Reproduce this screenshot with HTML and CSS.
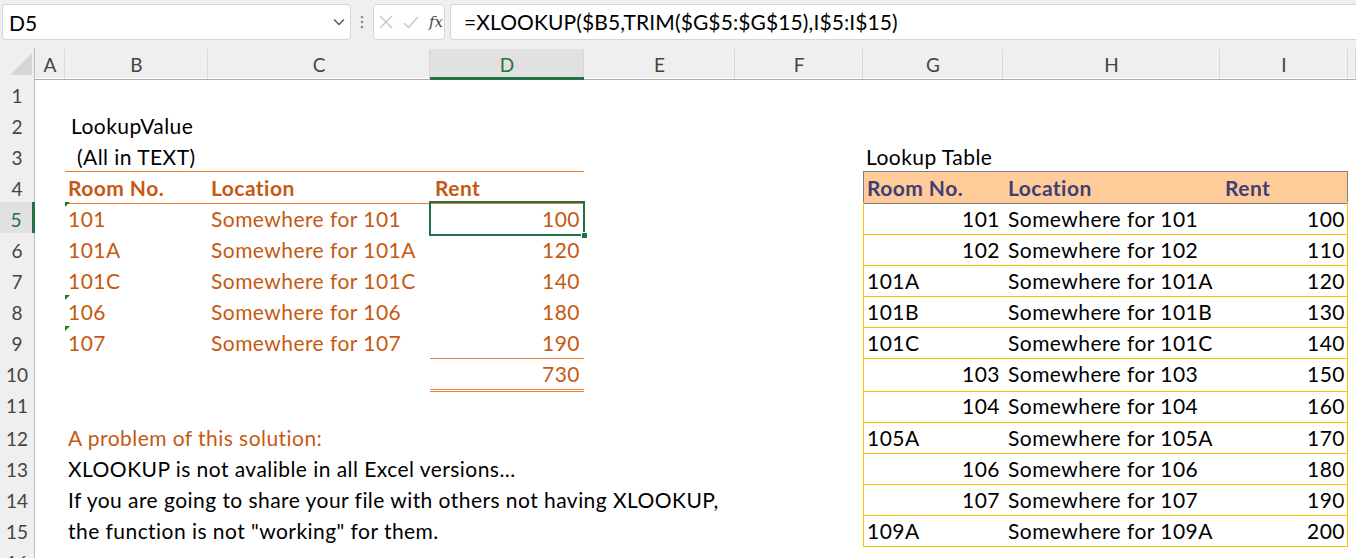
FILE: index.html
```html
<!DOCTYPE html>
<html lang="en">
<head>
  <meta charset="UTF-8" />
  <title>XLOOKUP with TRIM</title>
  <link rel="stylesheet" href="styles.css">
</head>
<body>
  <div class="toolbar">
    <div class="namebox">
      <span>D5</span>
      <svg class="chev" width="12" height="8" viewBox="0 0 12 8"><path d="M1 1.5 L6 6.5 L11 1.5" fill="none" stroke="#555" stroke-width="1.4"/></svg>
    </div>
    <svg class="grip" width="4" height="14" viewBox="0 0 4 14"><circle cx="2" cy="2" r="1.3" fill="#8a8a8a"/><circle cx="2" cy="7" r="1.3" fill="#8a8a8a"/><circle cx="2" cy="12" r="1.3" fill="#8a8a8a"/></svg>
    <div class="fxbox">
      <svg width="14" height="14" viewBox="0 0 14 14"><path d="M1 1 L13 13 M13 1 L1 13" stroke="#c4c4c4" stroke-width="1.4"/></svg>
      <svg width="16" height="13" viewBox="0 0 16 13"><path d="M1 7 L5.5 11.5 L15 1" fill="none" stroke="#c4c4c4" stroke-width="1.4"/></svg>
      <span class="fx">fx</span>
    </div>
    <div class="formula">=XLOOKUP($B5,TRIM($G$5:$G$15),I$5:I$15)</div>
  </div>

  <div class="sheet">
    <div class="row colhead">
      <div class="corner"><svg width="24" height="24" viewBox="0 0 24 24"><polygon points="23,1 23,23 1,23" fill="#d6d6d6"/></svg></div>
      <div class="ch">A</div><div class="ch">B</div><div class="ch">C</div>
      <div class="ch sel">D</div><div class="ch">E</div><div class="ch">F</div>
      <div class="ch">G</div><div class="ch">H</div><div class="ch">I</div><div class="ch"></div>
    </div>

    <div class="row"><div class="rh">1</div></div>
    <div class="row"><div class="rh">2</div><div class="b ind1">LookupValue</div></div>
    <div class="row">
      <div class="rh">3</div><div class="b ind2">(All in TEXT)</div>
      <div class="g">Lookup Table</div>
    </div>
    <div class="row">
      <div class="rh">4</div>
      <div class="b lh top">Room No.</div><div class="c lh top">Location</div><div class="d lh top rent">Rent</div>
      <div class="g th thl">Room No.</div><div class="h th">Location</div><div class="i th thr">Rent</div>
    </div>
    <div class="row">
      <div class="rh rsel">5</div>
      <div class="b lt flag">101</div><div class="c lt">Somewhere for 101</div><div class="d lt num cur">100</div>
      <div class="g tl num">101</div><div class="h td">Somewhere for 101</div><div class="i tr num">100</div>
    </div>
    <div class="row">
      <div class="rh">6</div>
      <div class="b lt">101A</div><div class="c lt">Somewhere for 101A</div><div class="d lt num">120</div>
      <div class="g tl num">102</div><div class="h td">Somewhere for 102</div><div class="i tr num">110</div>
    </div>
    <div class="row">
      <div class="rh">7</div>
      <div class="b lt">101C</div><div class="c lt">Somewhere for 101C</div><div class="d lt num">140</div>
      <div class="g tl">101A</div><div class="h td">Somewhere for 101A</div><div class="i tr num">120</div>
    </div>
    <div class="row">
      <div class="rh">8</div>
      <div class="b lt flag">106</div><div class="c lt">Somewhere for 106</div><div class="d lt num">180</div>
      <div class="g tl">101B</div><div class="h td">Somewhere for 101B</div><div class="i tr num">130</div>
    </div>
    <div class="row">
      <div class="rh">9</div>
      <div class="b lt flag">107</div><div class="c lt">Somewhere for 107</div><div class="d lt num under">190</div>
      <div class="g tl">101C</div><div class="h td">Somewhere for 101C</div><div class="i tr num">140</div>
    </div>
    <div class="row">
      <div class="rh">10</div>
      <div class="d lt num total">730</div>
      <div class="g tl num">103</div><div class="h td">Somewhere for 103</div><div class="i tr num">150</div>
    </div>
    <div class="row tall">
      <div class="rh">11</div>
      <div class="g tl num">104</div><div class="h td">Somewhere for 104</div><div class="i tr num">160</div>
    </div>
    <div class="row">
      <div class="rh">12</div>
      <div class="b lt">A problem of this solution:</div>
      <div class="g tl">105A</div><div class="h td">Somewhere for 105A</div><div class="i tr num">170</div>
    </div>
    <div class="row">
      <div class="rh">13</div>
      <div class="b">XLOOKUP is not avalible in all Excel versions...</div>
      <div class="g tl num">106</div><div class="h td">Somewhere for 106</div><div class="i tr num">180</div>
    </div>
    <div class="row">
      <div class="rh">14</div>
      <div class="b">If you are going to share your file with others not having XLOOKUP,</div>
      <div class="g tl num">107</div><div class="h td">Somewhere for 107</div><div class="i tr num">190</div>
    </div>
    <div class="row">
      <div class="rh">15</div>
      <div class="b">the function is not "working" for them.</div>
      <div class="g tl">109A</div><div class="h td">Somewhere for 109A</div><div class="i tr num">200</div>
    </div>
    <div class="row"><div class="rh">16</div></div>
  </div>
</body>
</html>
```

FILE: styles.css
```css
body {
  margin: 0;
  font-family: 'Lato', sans-serif;
  background: #fff;
  color: #000;
  overflow: hidden;
}
.toolbar {
  display: flex;
  align-items: center;
  height: 48px;
  padding: 4px 0 8px 2px;
  box-sizing: border-box;
  background: #efefef;
}
.namebox {
  display: flex;
  align-items: center;
  justify-content: space-between;
  width: 349px;
  height: 36px;
  box-sizing: border-box;
  background: #fff;
  border: 1px solid #d6d6d6;
  border-radius: 4px;
  padding: 0 4px 0 6px;
  font-size: 21px;
}
.chev {
  margin-right: 1px;
}
.grip {
  margin: 0 9px 0 9px;
}
.fxbox {
  display: flex;
  align-items: center;
  gap: 10px;
  width: 72px;
  height: 36px;
  box-sizing: border-box;
  background: #fff;
  border: 1px solid #d6d6d6;
  border-radius: 4px;
  padding: 0 0 0 5px;
}
.fx {
  font-family: 'DejaVu Serif', serif;
  font-style: italic;
  font-size: 15px;
  color: #444;
}
.formula {
  flex: 1;
  height: 36px;
  margin-left: 5px;
  box-sizing: border-box;
  background: #fff;
  border: 1px solid #d6d6d6;
  border-right: none;
  border-radius: 4px 0 0 4px;
  padding-left: 13px;
  font-size: 21px;
  letter-spacing: 0.1px;
  line-height: 34px;
  white-space: nowrap;
}
.sheet {
  --cols: 35px 30px 143px 222px 154px 151px 128px 140px 217px 128px 1fr;
}
.row {
  display: grid;
  grid-template-columns: var(--cols);
  height: 31px;
  font-size: 21px;
  letter-spacing: 0.45px;
  line-height: 31px;
  white-space: nowrap;
}
.row > * {
  grid-row: 1;
  box-sizing: border-box;
  padding: 1px 3px 0;
  min-width: 0;
}
.row.tall {
  height: 33px;
  line-height: 33px;
}
.colhead {
  height: 30px;
  background: #efefef;
  letter-spacing: 0;
}
.corner {
  grid-column: 1;
  padding: 4px 0 0 9px;
  border-right: 1px solid #bdbdbd;
  border-bottom: 1px solid #ababab;
}
.corner svg {
  display: block;
}
.ch {
  text-align: center;
  color: #444;
  font-size: 19px;
  line-height: 24px;
  padding-top: 5px;
  border-bottom: 1px solid #ababab;
  box-shadow: inset -1px 5px 0 -4px #efefef, inset -1px 0 0 #d8d8d8;
}
.ch.sel {
  background: #e1e1e1;
  color: #217346;
  border-bottom: 3px solid #217346;
}
.rh {
  grid-column: 1;
  text-align: center;
  color: #444;
  font-size: 19px;
  letter-spacing: 0;
  line-height: 27px;
  padding: 4px 0 0;
  background: #efefef;
  border-right: 1px solid #bdbdbd;
  border-bottom: 1px solid #d8d8d8;
}
.rh.rsel {
  background: #e1e1e1;
  color: #217346;
  border-right: 3px solid #217346;
}
.b { grid-column: 3; }
.c { grid-column: 4; }
.d { grid-column: 5; }
.g { grid-column: 8; }
.h { grid-column: 9; }
.i { grid-column: 10; }
.ind1 { padding-left: 6px; }
.ind2 { padding-left: 12px; }

/* left table */
.lt, .lh {
  color: #c65911;
}
.lh {
  font-weight: bold;
  border-bottom: 1px solid #ed7d31;
}
.lh.top {
  box-shadow: inset 0 1px 0 #ed7d31;
}
.rent {
  padding-left: 5px;
}
.num {
  text-align: right;
}
.d.num {
  padding-right: 4px;
}
.under {
  border-bottom: 1px solid #ed7d31;
}
.total {
  border-bottom: 3px double #ed7d31;
}
.cur {
  position: relative;
}
.cur::after {
  content: "";
  position: absolute;
  left: -1px;
  top: -1px;
  right: -1px;
  bottom: -1px;
  border: 2px solid #217346;
}
.cur::before {
  content: "";
  position: absolute;
  right: -4px;
  bottom: -4px;
  width: 5px;
  height: 5px;
  background: #217346;
  border: 1px solid #fff;
  z-index: 1;
}
.flag {
  position: relative;
}
.flag::before {
  content: "";
  position: absolute;
  left: 0;
  top: 0;
  border-top: 5px solid #1e7b1e;
  border-right: 5px solid transparent;
}

/* lookup table */
.th {
  background: #ffcc99;
  color: #3f3f76;
  font-weight: bold;
  border-bottom: 1px solid #7f7f7f;
  box-shadow: inset 0 1px 0 #7f7f7f;
}
.thl {
  box-shadow: inset 0 1px 0 #7f7f7f, inset 1px 0 0 #7f7f7f;
  padding-left: 4px;
}
.thr {
  box-shadow: inset 0 1px 0 #7f7f7f, inset -1px 0 0 #7f7f7f;
  padding-left: 5px;
}
.h.th {
  padding-left: 5px;
}
.tl, .td, .tr {
  border-bottom: 1px solid #ffc000;
}
.tl {
  box-shadow: inset 1px 0 0 #ffc000;
  padding-left: 4px;
}
.tr {
  box-shadow: inset -1px 0 0 #ffc000;
  padding-right: 3px;
}
.td {
  padding-left: 5px;
}
```
